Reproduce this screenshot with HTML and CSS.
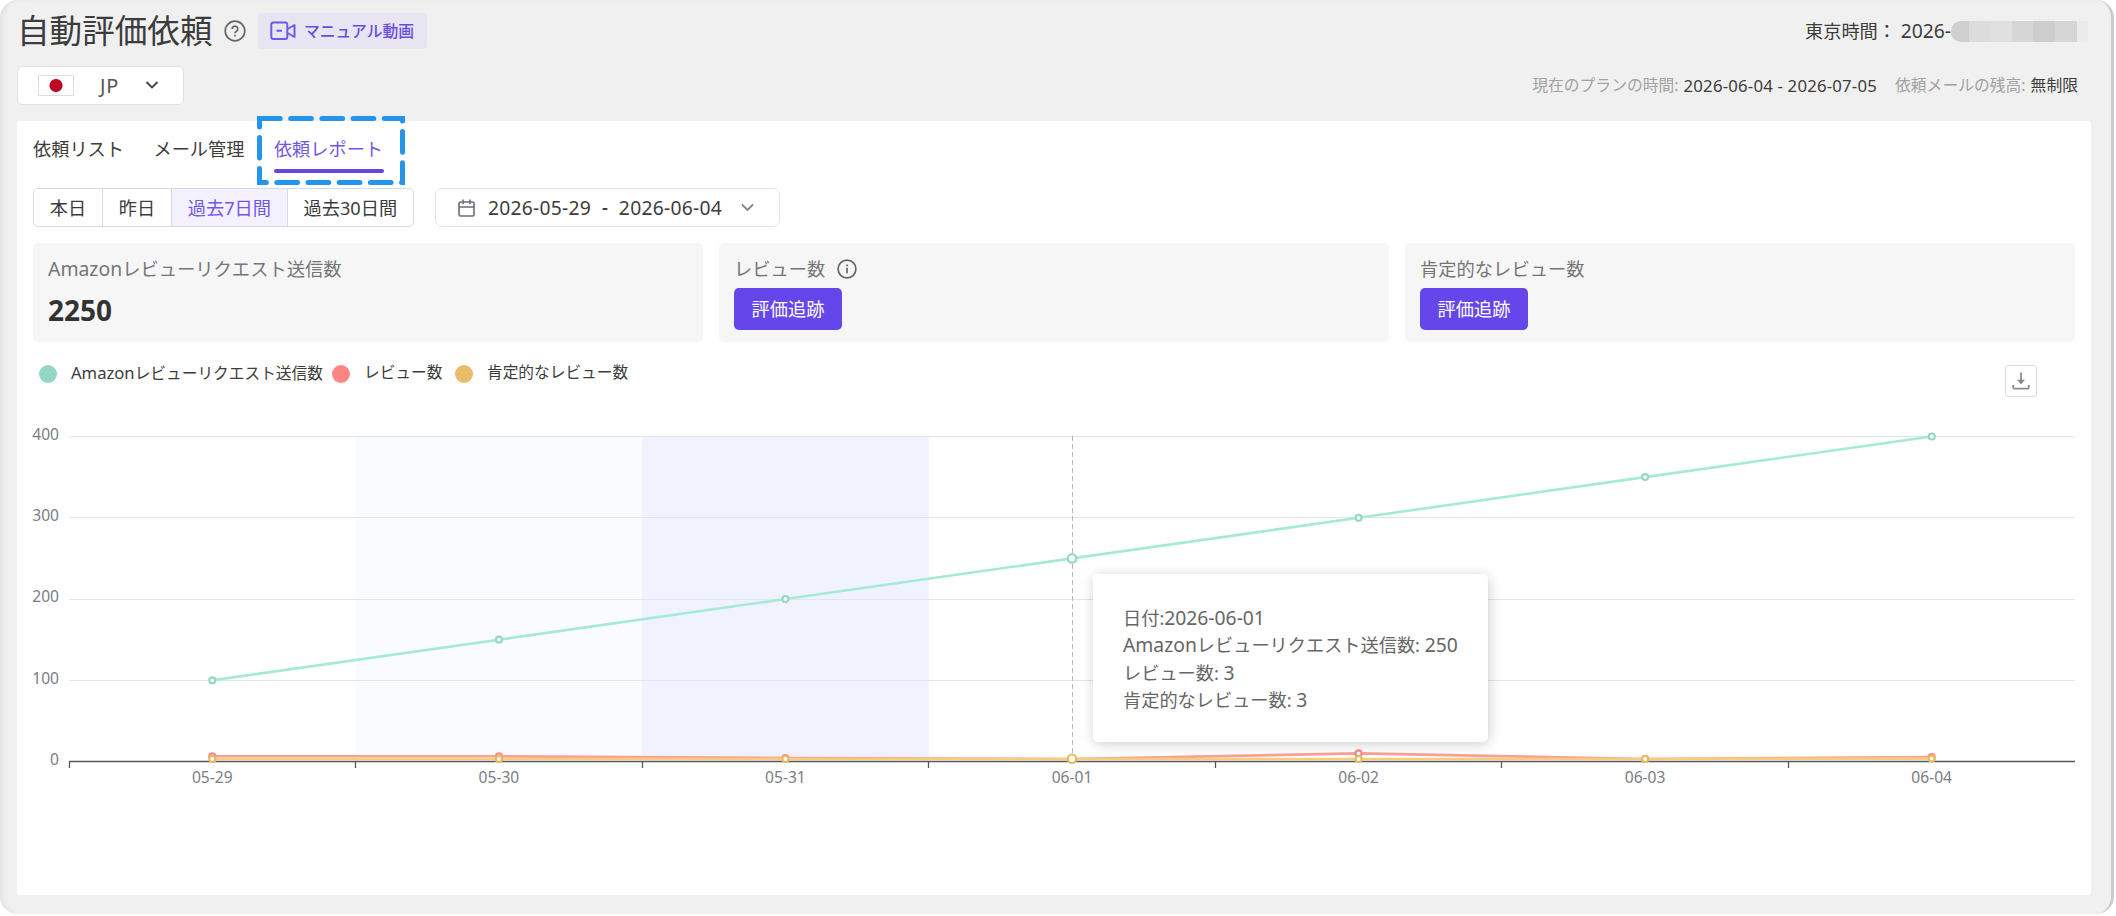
FILE: index.html
```html
<!DOCTYPE html>
<html lang="ja">
<head>
    <meta charset="UTF-8">
    <meta name="viewport" content="width=device-width, initial-scale=1.0">
    <title>自動評価依頼</title>
    <link rel="stylesheet" href="styles.css">
</head>
<body>
    <div class="page">
        <header class="header">
            <div class="header-row">
                <h1>自動評価依頼</h1>
                <svg class="help-icon" width="22" height="22" viewBox="0 0 22 22" fill="none" stroke="#666" stroke-width="1.7">
                    <circle cx="11" cy="11" r="9.8"/>
                    <path d="M8.2 9a2.8 2.8 0 1 1 4.3 2.3c-1 .6-1.5 1-1.5 2"/>
                    <path d="M11 14.8v1.8"/>
                </svg>
                <a class="manual-link">
                    <svg width="27" height="20" viewBox="0 0 27 20" fill="none" stroke="#7358e6" stroke-width="2" stroke-linejoin="round">
                        <rect x="1.3" y="1.5" width="16" height="16.5" rx="2"/>
                        <path d="M6.5 9.7h5.5M17.5 8l7-4v12l-7-4"/>
                    </svg>
                    <span>マニュアル動画</span>
                </a>
                <div class="clock">
                    <span>東京時間： <span class="num">2026-</span></span>
                    <span class="mask"></span>
                </div>
            </div>
            <div class="header-row">
                <div class="country-select">
                    <span class="flag"></span>
                    <span class="country">JP</span>
                    <svg width="14" height="10" viewBox="0 0 14 10" fill="none" stroke="#444" stroke-width="1.9"><path d="M1.5 2l5.5 5.5L12.5 2"/></svg>
                </div>
                <div class="plan">
                    <span class="muted">現在のプランの時間:</span>
                    <span class="num plan-date">2026-06-04 - 2026-07-05</span>
                    <span class="muted">依頼メールの残高:</span>
                    <span>無制限</span>
                </div>
            </div>
        </header>

        <main class="panel">
            <nav class="tabs">
                <a class="tab">依頼リスト</a>
                <a class="tab">メール管理</a>
                <a class="tab active">依頼レポート
                    <svg class="highlight" width="150" height="71" viewBox="0 0 150 71" fill="none" stroke="#2494ec" stroke-width="5" stroke-linecap="round">
                        <path d="M3.5 3.5h143v64h-143z" stroke-dasharray="20.7 10.5"/>
                    </svg>
                </a>
            </nav>

            <div class="filters">
                <div class="range-group">
                    <span class="range">本日</span>
                    <span class="range">昨日</span>
                    <span class="range selected">過去7日間</span>
                    <span class="range">過去30日間</span>
                </div>
                <div class="date-picker">
                    <svg width="17" height="18" viewBox="0 0 17 18" fill="none" stroke="#6f6c7c" stroke-width="1.6">
                        <rect x="1" y="3" width="15" height="14" rx="1.5"/>
                        <path d="M1 8h15M5 .5v4.5M12 .5v4.5"/>
                    </svg>
                    <span class="num start">2026-05-29</span>
                    <span class="dash">-</span>
                    <span class="num end">2026-06-04</span>
                    <svg class="arrow" width="13" height="9" viewBox="0 0 13 9" fill="none" stroke="#85828e" stroke-width="1.8"><path d="M1 1.5l5.5 5.5L12 1.5"/></svg>
                </div>
            </div>

            <div class="cards">
                <div class="card">
                    <div class="card-label"><span class="num">Amazon</span>レビューリクエスト送信数</div>
                    <div class="card-value">2250</div>
                </div>
                <div class="card">
                    <div class="card-label">レビュー数
                        <svg class="info-icon" width="20" height="20" viewBox="0 0 20 20" fill="none" stroke="#666" stroke-width="1.7">
                            <circle cx="10" cy="10" r="8.9"/>
                            <path d="M10 8.7v5.6M10 5.4v1.9"/>
                        </svg>
                    </div>
                    <button class="track-btn">評価追跡</button>
                </div>
                <div class="card">
                    <div class="card-label">肯定的なレビュー数</div>
                    <button class="track-btn">評価追跡</button>
                </div>
            </div>

            <div class="legend">
                <span class="dot green"></span><span class="legend-text first"><span class="num">Amazon</span>レビューリクエスト送信数</span>
                <span class="dot red"></span><span class="legend-text second">レビュー数</span>
                <span class="dot yellow"></span><span class="legend-text">肯定的なレビュー数</span>
                <button class="download-btn">
                    <svg width="20" height="20" viewBox="0 0 20 20" fill="none" stroke="#8c8c8c" stroke-width="1.8">
                        <path d="M10 1.5v8M2.2 14v2.5a1.2 1.2 0 0 0 1.2 1.2h13.2a1.2 1.2 0 0 0 1.2-1.2V14"/>
                        <path d="M6.5 9h7l-3.5 4.2z" fill="#8c8c8c" stroke-width=".6"/>
                    </svg>
                </button>
            </div>

            <div class="chart">
                <svg class="plot" width="2042" height="380" viewBox="0 0 2042 380">
                    <!-- bands -->
                    <rect x="322.6" y="20" width="286.5" height="325" fill="#fafbff"/>
                    <rect x="609.1" y="20" width="286.6" height="325" fill="#f0f2ff"/>
                    <!-- grid -->
                    <path class="grid" d="M36 20.5H2042M36 101.5H2042M36 183.5H2042M36 264.5H2042"/>
                    <path class="axis" d="M36 345.5H2042M36.5 345v7M322.5 345v7M609.5 345v7M895.5 345v7M1182.5 345v7M1468.5 345v7M1755.5 345v7"/>
                    <g class="axis-text" text-anchor="end">
                        <text x="26" y="24">400</text>
                        <text x="26" y="105">300</text>
                        <text x="26" y="186">200</text>
                        <text x="26" y="268">100</text>
                        <text x="26" y="349">0</text>
                    </g>
                    <g class="axis-text" text-anchor="middle">
                        <text x="179.3" y="367">05-29</text>
                        <text x="465.9" y="367">05-30</text>
                        <text x="752.4" y="367">05-31</text>
                        <text x="1039" y="367">06-01</text>
                        <text x="1325.6" y="367">06-02</text>
                        <text x="1612.1" y="367">06-03</text>
                        <text x="1898.7" y="367">06-04</text>
                    </g>
                    <path d="M1039.5 20V345" stroke="#b5b5b5" stroke-dasharray="5 3"/>
                    <!-- series -->
                    <g class="series" stroke="#a5ead4">
                        <polyline points="179.3,264.3 465.9,223.7 752.4,183 1039,142.4 1325.6,101.8 1612.1,61.1 1898.7,20.5"/>
                        <g class="points" stroke="#94d8c4">
                            <circle cx="179.3" cy="264.3" r="3"/><circle cx="465.9" cy="223.7" r="3"/><circle cx="752.4" cy="183" r="3"/>
                            <circle cx="1039" cy="142.4" r="4.2"/><circle cx="1325.6" cy="101.8" r="3"/><circle cx="1612.1" cy="61.1" r="3"/><circle cx="1898.7" cy="20.5" r="3"/>
                        </g>
                    </g>
                    <g class="series" stroke="#fc9f96">
                        <polyline points="179.3,340.3 465.9,340.3 752.4,342 1039,343 1325.6,337.4 1612.1,343 1898.7,341"/>
                        <g class="points" stroke="#f88b87">
                            <circle cx="179.3" cy="340.3" r="3"/><circle cx="465.9" cy="340.3" r="3"/><circle cx="752.4" cy="342" r="3"/>
                            <circle cx="1325.6" cy="337.4" r="3"/><circle cx="1612.1" cy="343" r="3"/><circle cx="1898.7" cy="341" r="3"/>
                        </g>
                    </g>
                    <g class="series" stroke="#f8cc7d">
                        <polyline points="179.3,343 465.9,343 752.4,343 1039,343 1325.6,343 1612.1,343 1898.7,342.6"/>
                        <g class="points" stroke="#e9b960">
                            <circle cx="179.3" cy="343" r="3"/><circle cx="465.9" cy="343" r="3"/><circle cx="752.4" cy="343" r="3"/>
                            <circle cx="1039" cy="342.7" r="4.2"/><circle cx="1325.6" cy="343" r="3"/><circle cx="1612.1" cy="343" r="3"/><circle cx="1898.7" cy="342.6" r="3"/>
                        </g>
                    </g>
                </svg>
                <div class="tooltip">
                    <div>日付:<span class="num">2026-06-01</span></div>
                    <div><span class="num">Amazon</span>レビューリクエスト送信数: <span class="num">250</span></div>
                    <div>レビュー数: <span class="num">3</span></div>
                    <div>肯定的なレビュー数: <span class="num">3</span></div>
                </div>
            </div>
        </main>
    </div>
</body>
</html>
```
FILE: styles.css
```css
* {
    box-sizing: border-box;
}
body {
    margin: 0;
    background: #fff;
    font-family: 'Noto Sans', 'Noto Sans CJK JP', sans-serif;
    font-size: 18.2px;
    line-height: 27px;
    color: #3c3c3c;
}
svg {
    display: block;
    flex: none;
}
.num {
    font-size: 1.06em;
}
.page {
    width: 2114px;
    height: 914px;
    padding: 12px 20px 19px 17px;
    background: #f0f0f0;
    border-radius: 18px;
    border-right: 3px solid #c9cad0;
    box-shadow: inset 5px 0 5px -2px #e2e2e2;
    display: flex;
    flex-direction: column;
    white-space: nowrap;
}
.header {
    height: 109px;
}
.header-row {
    display: flex;
    align-items: center;
    height: 38px;
}
.header-row + .header-row {
    height: 40px;
    margin-top: 15px;
}
h1 {
    margin: 0;
    width: 207px;
    font-size: 32.6px;
    font-weight: 400;
    line-height: 38px;
}
.manual-link {
    display: flex;
    align-items: center;
    gap: 7px;
    width: 169px;
    height: 36px;
    margin-left: 12px;
    padding-left: 12px;
    background: #e8e5f3;
    border-radius: 4px;
    color: #6a4de0;
    font-size: 15.8px;
    font-weight: 500;
}
.clock {
    display: flex;
    align-items: center;
    margin-left: auto;
}
.mask {
    width: 137px;
    height: 21px;
    margin-right: 3px;
    border-radius: 10px 2px 2px 10px;
    background: linear-gradient(90deg, #cfcfcf 18px, #dcdcdc 18px 40px, #e0e0e0 40px 61px, #d6d6d6 61px 82px, #cecece 82px 104px, #d6d6d6 104px 126px, #ebebeb 126px);
}
.country-select {
    display: flex;
    align-items: center;
    width: 167px;
    height: 39px;
    padding-left: 20px;
    background: #fff;
    border: 1px solid #e2e2e2;
    border-radius: 6px;
}
.flag {
    width: 36px;
    height: 21px;
    border: 1px solid #ddd;
    background: radial-gradient(circle, #bc0824 6px, #fff 7px);
}
.country {
    width: 45px;
    margin-left: 26px;
    color: #555;
    font-size: 20px;
    letter-spacing: .8px;
}
.plan {
    display: flex;
    margin-left: auto;
    padding-right: 13px;
    gap: 5px;
    font-size: 15.8px;
}
.plan-date {
    margin-right: 13px;
    letter-spacing: .2px;
}
.muted {
    color: #a2a2a2;
}
.panel {
    flex: 1;
    padding: 15px 16px 0;
    background: #fff;
    border-radius: 3px;
}
.tabs {
    display: flex;
    gap: 29.5px;
}
.tab {
    position: relative;
    height: 38px;
}
.tab.active {
    color: #7456e4;
}
.tab.active::after {
    content: "";
    display: block;
    width: 110px;
    height: 4px;
    margin-top: 6px;
    border-radius: 2px;
    background: #6547dc;
}
.highlight {
    position: absolute;
    left: -18px;
    top: -21px;
}
.filters {
    display: flex;
    gap: 21px;
    margin-top: 14px;
}
.range-group {
    display: flex;
    height: 39px;
    border: 1px solid #d9d9df;
    border-radius: 5px;
    overflow: hidden;
}
.range {
    padding: 0 15.8px;
    line-height: 38px;
}
.range + .range {
    border-left: 1px solid #d9d9df;
}
.range.selected {
    color: #7456e4;
    background: #f4f1ff;
}
.date-picker {
    display: flex;
    align-items: center;
    width: 345px;
    height: 39px;
    padding-left: 22px;
    border: 1px solid #e4e4e8;
    border-radius: 7px;
}
.start, .end {
    letter-spacing: .25px;
}
.start {
    margin-left: 13px;
}
.dash {
    margin: 0 11px;
    font-weight: 600;
}
.arrow {
    margin-left: 19px;
}
.cards {
    display: grid;
    grid-template-columns: repeat(3, 1fr);
    gap: 16px;
    margin-top: 16px;
}
.card {
    height: 99px;
    padding: 12px 15px;
    background: #f6f6f7;
    border-radius: 5px;
}
.card-label {
    display: flex;
    align-items: center;
    color: #757575;
    font-size: 18.3px;
}
.info-icon {
    margin-left: 12px;
}
.card-value {
    margin-top: 12px;
    color: #333;
    font-size: 28px;
    font-weight: 700;
    line-height: 32px;
}
.track-btn {
    width: 108px;
    height: 42px;
    margin-top: 6px;
    padding: 0;
    border: none;
    border-radius: 5px;
    background: #6446eb;
    color: #fff;
    font: inherit;
    cursor: pointer;
}
.legend {
    display: flex;
    align-items: center;
    height: 32px;
    margin-top: 23px;
    padding: 0 38px 0 6px;
    font-size: 15.7px;
}
.dot {
    width: 18px;
    height: 18px;
    margin-top: -15px;
    border-radius: 50%;
}
.green {
    background: #93d8c5;
}
.red {
    background: #ff8585;
}
.yellow {
    background: #e8be6a;
}
.legend-text {
    margin: -17px 0 0 14px;
}
.legend-text.first {
    width: 261px;
}
.legend-text.second {
    width: 91px;
}
.download-btn {
    display: flex;
    align-items: center;
    justify-content: center;
    width: 32px;
    height: 32px;
    margin-left: auto;
    padding: 0;
    border: 1px solid #dcdcdc;
    border-radius: 3px;
    background: #fff;
}
.chart {
    position: relative;
    margin-top: 19px;
}
.plot {
    overflow: visible;
}
.grid {
    stroke: #e0e6e9;
    fill: none;
}
.axis {
    stroke: #55575f;
    stroke-width: 1.3;
    fill: none;
}
.axis-text {
    font-size: 15.6px;
    fill: #7b7d84;
}
.series {
    fill: none;
    stroke-width: 2.6;
}
.points {
    fill: #fff;
    stroke-width: 2.2;
}
.tooltip {
    position: absolute;
    left: 1060px;
    top: 158px;
    width: 395px;
    height: 168px;
    padding: 30px;
    background: #fff;
    border-radius: 5px;
    box-shadow: 1px 2px 13px rgba(0, 0, 0, 0.2);
    color: #666;
    line-height: 27.3px;
}
.tooltip div {
    height: 27.3px;
}
```
